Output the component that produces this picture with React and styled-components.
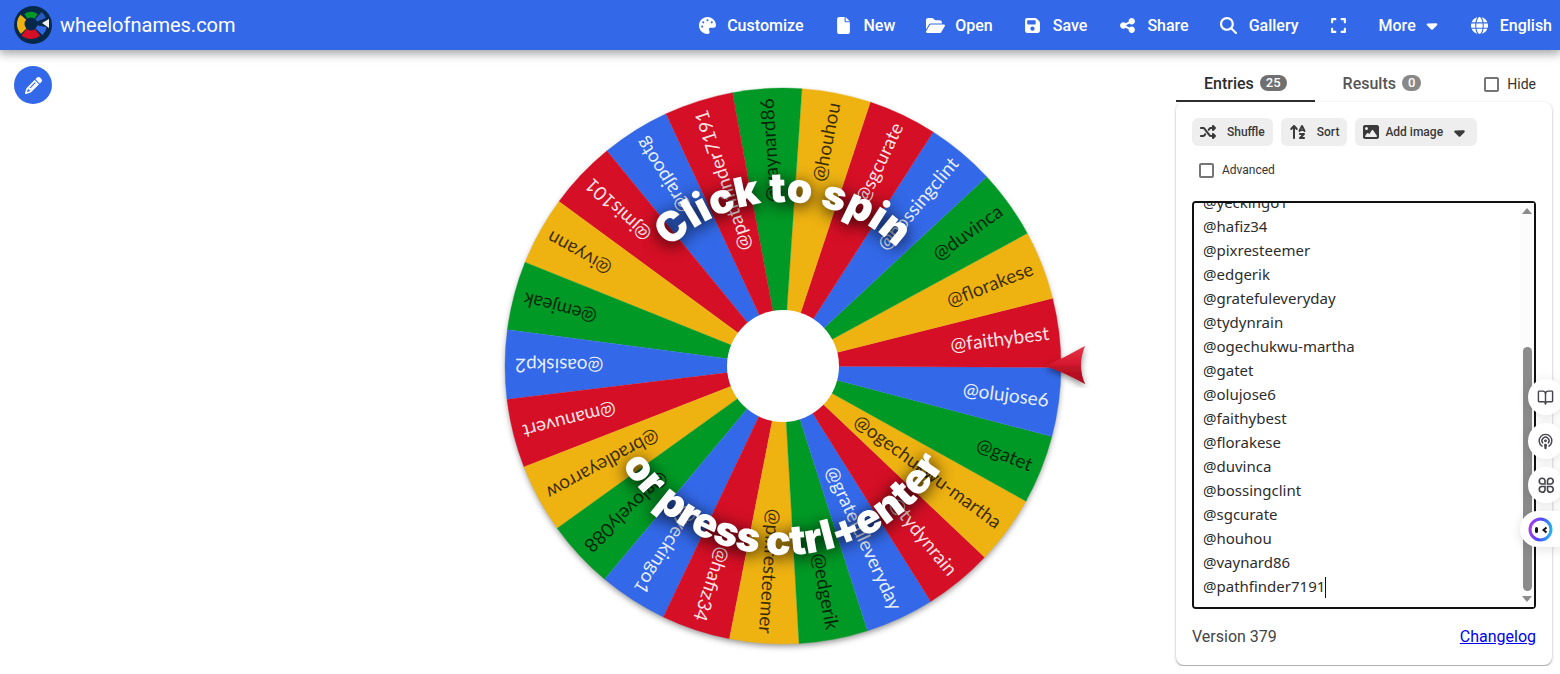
import { useEffect, useRef } from 'react';
import styled, { createGlobalStyle } from 'styled-components';
import {
  FaArrowUpAZ,
  FaCaretDown,
  FaExpand,
  FaFile,
  FaFloppyDisk,
  FaFolderOpen,
  FaGlobe,
  FaImage,
  FaMagnifyingGlass,
  FaPalette,
  FaPencil,
  FaShareNodes,
  FaShuffle,
} from 'react-icons/fa6';
import { BookOpen, Podcast } from 'lucide-react';

const BLUE = '#3369e8';
const RED = '#d50f25';
const YELLOW = '#eeb211';
const GREEN = '#009925';
const PALETTE = [BLUE, RED, YELLOW, GREEN];

const ENTRIES = [
  '@rajpootg',
  '@jmis101',
  '@ivyann',
  '@emjeak',
  '@oasiskp2',
  '@manuvert',
  '@bradleyarrow',
  '@glovely088',
  '@yeckingo1',
  '@hafiz34',
  '@pixresteemer',
  '@edgerik',
  '@gratefuleveryday',
  '@tydynrain',
  '@ogechukwu-martha',
  '@gatet',
  '@olujose6',
  '@faithybest',
  '@florakese',
  '@duvinca',
  '@bossingclint',
  '@sgcurate',
  '@houhou',
  '@vaynard86',
  '@pathfinder7191',
];

const GlobalStyle = createGlobalStyle`
  *, *::before, *::after {
    box-sizing: border-box;
  }

  body {
    margin: 0;
    background: #ffffff;
    color: #212121;
    font-family: Roboto, 'Liberation Sans', sans-serif;
    overflow: hidden;
  }

  button {
    font-family: inherit;
    border: none;
    padding: 0;
    cursor: pointer;
  }
`;

const Header = styled.header`
  position: relative;
  display: flex;
  align-items: center;
  justify-content: space-between;
  height: 50px;
  padding: 0 8px 0 14px;
  background: ${BLUE};
  color: #ffffff;
  box-shadow: 0 2px 10px 1px rgba(0, 0, 0, 0.4);
`;

const Brand = styled.a`
  display: flex;
  align-items: center;
  gap: 8px;
  color: inherit;
  font-size: 20px;
  text-decoration: none;
`;

const Nav = styled.nav`
  display: flex;
  align-items: center;
  gap: 28px;
`;

const NavButton = styled.button`
  display: flex;
  align-items: center;
  gap: 8px;
  height: 36px;
  background: none;
  color: inherit;
  font-size: 16px;
  font-weight: 500;
`;

const IconBox = styled.span`
  display: inline-flex;
  align-items: center;
  justify-content: center;
  width: ${(props) => props.$width || 24}px;
  flex: none;
`;

const Main = styled.main`
  display: flex;
  align-items: flex-start;
  padding-top: 16px;
`;

const Aside = styled.div`
  width: 25%;
  padding-left: 14px;
`;

const EditButton = styled.button`
  display: flex;
  align-items: center;
  justify-content: center;
  width: 38px;
  height: 38px;
  border-radius: 50%;
  background: ${BLUE};
  color: #ffffff;
`;

const Stage = styled.div`
  flex: 1;
  min-width: 0;
  display: flex;
  justify-content: center;
`;

const WheelSvg = styled.svg`
  display: block;
  width: 100%;
  max-width: 606px;
  overflow: visible;
  cursor: pointer;
`;

const SliceText = styled.text`
  font-family: Lato, sans-serif;
  font-size: 19px;
  text-anchor: end;
`;

const HintText = styled.text`
  font-family: Inter, 'Liberation Sans', sans-serif;
  font-size: 41px;
  font-weight: 900;
  fill: #ffffff;
  text-anchor: middle;
  filter: drop-shadow(0 3px 8px rgba(0, 0, 0, 0.9));
`;

const Panel = styled.section`
  width: 376px;
  flex: none;
  margin-right: 8px;
`;

const TabRow = styled.div`
  display: flex;
  align-items: center;
  height: 36px;
`;

const Tab = styled.button`
  display: flex;
  align-items: center;
  gap: 6px;
  height: 36px;
  padding: 0 28px;
  background: none;
  border-bottom: 2px solid ${(props) => (props.$active ? '#2d2d2d' : 'transparent')};
  color: ${(props) => (props.$active ? '#2d2d2d' : '#555555')};
  font-size: 16px;
  font-weight: 500;
`;

const Badge = styled.span`
  padding: 0 6px;
  border-radius: 8px;
  background: ${(props) => (props.$active ? '#707070' : '#888888')};
  color: #ffffff;
  font-size: 13px;
  line-height: 16px;
`;

const CheckLabel = styled.label`
  display: flex;
  align-items: center;
  gap: 8px;
  color: #333333;
  font-size: ${(props) => props.$size}px;
  line-height: 16px;
`;

const HideLabel = styled(CheckLabel)`
  margin-left: auto;
  margin-right: 16px;
`;

const Check = styled.input`
  appearance: none;
  width: 15px;
  height: 15px;
  margin: 0;
  border: 2px solid #757575;
  border-radius: 2px;
  background: #ffffff;
`;

const Card = styled.div`
  padding: 16px;
  border-radius: 8px;
  background: #ffffff;
  box-shadow: 0 1px 3px rgba(0, 0, 0, 0.25), 0 1px 1px rgba(0, 0, 0, 0.2);
`;

const Tools = styled.div`
  display: flex;
  gap: 8px;
`;

const ToolButton = styled.button`
  display: flex;
  align-items: center;
  gap: ${(props) => props.$gap}px;
  height: 28px;
  padding: 0 8px;
  border-radius: 6px;
  background: #eeeeee;
  color: #3a3a3a;
  font-size: 12px;
  font-weight: 500;
`;

const AdvancedRow = styled.div`
  padding: 16px 7px 23px;
`;

const EntriesBox = styled.div`
  position: relative;
`;

const EntriesInput = styled.textarea`
  display: block;
  width: 100%;
  height: 408px;
  padding: 8px 24px 9px 9px;
  border: 2px solid #111111;
  border-radius: 4px;
  outline: none;
  resize: none;
  overflow-y: scroll;
  scrollbar-width: none;
  background: #ffffff;
  color: #2d2d2d;
  font-family: 'Noto Sans', 'Open Sans', sans-serif;
  font-size: 15px;
  line-height: 24px;
`;

const ScrollBar = styled.div`
  position: absolute;
  top: 2px;
  right: 2px;
  bottom: 2px;
  width: 14px;
  display: flex;
  flex-direction: column;
  align-items: center;
  justify-content: flex-end;
  gap: 5px;
  padding: 5px 0;
  background: #fcfcfc;
  color: #8b8b8b;
`;

const ScrollArrow = styled.span`
  border: 5px solid transparent;
  border-top-width: ${(props) => (props.$up ? 0 : 6)}px;
  border-bottom-width: ${(props) => (props.$up ? 6 : 0)}px;
  border-${(props) => (props.$up ? 'bottom' : 'top')}-color: currentColor;
  margin-bottom: ${(props) => (props.$up ? 'auto' : 0)};
`;

const ScrollThumb = styled.span`
  width: 9px;
  height: 62%;
  border-radius: 5px;
  background: currentColor;
`;

const Caret = styled.span`
  position: absolute;
  left: 133px;
  bottom: 11px;
  width: 1px;
  height: 21px;
  background: #111111;
`;

const Footer = styled.footer`
  display: flex;
  align-items: center;
  justify-content: space-between;
  height: 40px;
  padding-top: 15px;
  color: #444444;
  font-size: 16px;

  a {
    color: #0000ee;
  }
`;

const FloatingBar = styled.div`
  position: fixed;
  top: 379px;
  right: -4px;
  display: flex;
  flex-direction: column;
  align-items: flex-end;
  gap: 8px;
`;

const FloatingButton = styled.button`
  display: flex;
  align-items: center;
  width: ${(props) => (props.$wide ? 44 : 36)}px;
  height: 36px;
  padding-left: ${(props) => (props.$wide ? 8 : 9)}px;
  border-radius: ${(props) => (props.$wide ? '18px 0 0 18px' : '18px')};
  background: #ffffff;
  color: #44444c;
  box-shadow: 0 2px 12px rgba(0, 0, 0, 0.12);
`;

const NAV_ITEMS = [
  { label: 'Customize', icon: <FaPalette size={17} /> },
  { label: 'New', icon: <FaFile size={17} /> },
  { label: 'Open', icon: <FaFolderOpen size={19} /> },
  { label: 'Save', icon: <FaFloppyDisk size={17} /> },
  { label: 'Share', icon: <FaShareNodes size={17} /> },
  { label: 'Gallery', icon: <FaMagnifyingGlass size={17} /> },
];

function point(radius, degrees) {
  const a = (degrees * Math.PI) / 180;
  return `${(radius * Math.cos(a)).toFixed(2)} ${(radius * Math.sin(a)).toFixed(2)}`;
}

function slicePath(mid, half, radius) {
  return `M0 0L${point(radius, mid - half)}A${radius} ${radius} 0 0 1 ${point(radius, mid + half)}Z`;
}

function ringPath(from, to, inner, outer) {
  return `M${point(inner, from)}L${point(outer, from)}A${outer} ${outer} 0 0 1 ${point(outer, to)}L${point(inner, to)}A${inner} ${inner} 0 0 0 ${point(inner, from)}Z`;
}

function Logo() {
  return (
    <svg width="38" height="38" viewBox="-19 -19 38 38" aria-hidden="true">
      <circle r="19" fill="#06294a" />
      <g transform="translate(-2 -1)">
        <path d={ringPath(-124, -57, 6, 12)} fill={GREEN} />
        <path d={ringPath(136, 222, 6, 14)} fill={YELLOW} />
        <path d={ringPath(52, 130, 6, 15)} fill={RED} />
        <path d={ringPath(-48, -22, 6, 16)} fill="#2758c4" />
        <path d={ringPath(12, 44, 6, 16)} fill={BLUE} />
        <circle r="6.5" fill="#06294a" />
      </g>
      <path d="M9 -2L16 -6V3Z" fill="#eeeeee" />
    </svg>
  );
}

function Wheel() {
  const step = 360 / ENTRIES.length;
  return (
    <WheelSvg viewBox="-303 -300 606 600" role="img" aria-label="Click to spin or press ctrl+enter">
      <defs>
        <filter id="wheelShadow" x="-10%" y="-10%" width="120%" height="120%">
          <feDropShadow dx="0" dy="3" stdDeviation="3" floodColor="#000000" floodOpacity="0.45" />
        </filter>
        <linearGradient id="pointerFill" x1="0" y1="0" x2="0" y2="1">
          <stop offset="0" stopColor="#e8354a" />
          <stop offset="0.5" stopColor="#d3172c" />
          <stop offset="1" stopColor="#a80d1e" />
        </linearGradient>
        <path id="topArc" d="M-164 0A164 164 0 0 1 164 0" />
        <path id="bottomArc" d="M-189 0A189 189 0 0 0 189 0" />
      </defs>
      <circle r="277" fill="#ffffff" filter="url(#wheelShadow)" />
      {ENTRIES.map((name, i) => {
        const mid = 237.9 - step * i;
        // the last slice must not repeat the colour of the first one
        const fill = i === ENTRIES.length - 1 ? RED : PALETTE[i % 4];
        const dark = fill === YELLOW || fill === GREEN;
        return (
          <g key={name}>
            <path d={slicePath(mid, step / 2, 278)} fill={fill} stroke={fill} strokeWidth="0.3" />
            <SliceText
              transform={`rotate(${mid.toFixed(1)})`}
              x="268"
              y="6"
              fill={dark ? '#000000' : '#ffffff'}
              fillOpacity={dark ? 0.75 : 0.9}
            >
              {name}
            </SliceText>
          </g>
        );
      })}
      <circle r="56" fill="#ffffff" />
      <HintText>
        <textPath href="#topArc" startOffset="50%">Click to spin</textPath>
      </HintText>
      <HintText>
        <textPath href="#bottomArc" startOffset="50%">or press ctrl+enter</textPath>
      </HintText>
      <g filter="url(#wheelShadow)">
        <path d="M262 0Q283 -9 302 -20Q294 0 302 18Q283 7 262 0Z" fill="url(#pointerFill)" />
        <path d="M262 0L298 0Q298 10 302 18Q283 7 262 0Z" fill="#b01022" fillOpacity="0.5" />
      </g>
    </WheelSvg>
  );
}

function EntriesEditor() {
  const ref = useRef(null);

  useEffect(() => {
    const el = ref.current;
    el.scrollTop = el.scrollHeight;
  }, []);

  return (
    <EntriesBox>
      <EntriesInput ref={ref} aria-label="Entries" spellCheck={false} defaultValue={ENTRIES.join('\n')} />
      <Caret />
      <ScrollBar aria-hidden="true">
        <ScrollArrow $up />
        <ScrollThumb />
        <ScrollArrow />
      </ScrollBar>
    </EntriesBox>
  );
}

function GridIcon() {
  return (
    <svg width="18" height="18" viewBox="0 0 18 18" fill="none" stroke="currentColor" strokeWidth="1.6" aria-hidden="true">
      <path d="M8 8H4.5A2.9 2.9 0 1 1 8 4.6Z" />
      <path d="M10.5 8V4.6A2.9 2.9 0 1 1 14 8Z" />
      <path d="M8 10.5V14A2.9 2.9 0 1 1 4.5 10.5Z" />
      <path d="M10.5 10.5H14A2.9 2.9 0 1 1 10.5 14Z" />
    </svg>
  );
}

function FaceIcon() {
  return (
    <svg width="25" height="25" viewBox="0 0 25 25" fill="none" aria-hidden="true">
      <defs>
        <linearGradient id="faceRing" x1="0" y1="0.6" x2="1" y2="0.8">
          <stop offset="0" stopColor="#a23be8" />
          <stop offset="0.45" stopColor="#4a4bf6" />
          <stop offset="1" stopColor="#22b8ee" />
        </linearGradient>
      </defs>
      <circle cx="12.5" cy="12.5" r="10.5" stroke="url(#faceRing)" strokeWidth="3" />
      <rect x="7" y="10" width="3" height="6" rx="1.5" fill="#111111" />
      <path d="M18.5 10.5L15.5 13L18.5 15.5" stroke="#111111" strokeWidth="2" />
    </svg>
  );
}

export default function App() {
  return (
    <>
      <GlobalStyle />
      <Header>
        <Brand href="#">
          <Logo />
          wheelofnames.com
        </Brand>
        <Nav>
          {NAV_ITEMS.map((item) => (
            <NavButton key={item.label}>
              <IconBox>{item.icon}</IconBox>
              {item.label}
            </NavButton>
          ))}
          <NavButton aria-label="Fullscreen">
            <IconBox>
              <FaExpand size={17} />
            </IconBox>
          </NavButton>
          <NavButton>
            More
            <IconBox $width={16}>
              <FaCaretDown size={17} />
            </IconBox>
          </NavButton>
          <NavButton>
            <IconBox>
              <FaGlobe size={17} />
            </IconBox>
            English
          </NavButton>
        </Nav>
      </Header>
      <Main>
        <Aside>
          <EditButton aria-label="Edit title">
            <FaPencil size={17} />
          </EditButton>
        </Aside>
        <Stage>
          <Wheel />
        </Stage>
        <Panel>
          <TabRow>
            <Tab $active>
              Entries <Badge $active>25</Badge>
            </Tab>
            <Tab>
              Results <Badge>0</Badge>
            </Tab>
            <HideLabel $size={14}>
              <Check type="checkbox" />
              Hide
            </HideLabel>
          </TabRow>
          <Card>
            <Tools>
              <ToolButton $gap={11}>
                <FaShuffle size={16} />
                Shuffle
              </ToolButton>
              <ToolButton $gap={10}>
                <FaArrowUpAZ size={18} />
                Sort
              </ToolButton>
              <ToolButton $gap={6}>
                <FaImage size={16} />
                Add image
                <IconBox $width={20}>
                  <FaCaretDown size={17} />
                </IconBox>
              </ToolButton>
            </Tools>
            <AdvancedRow>
              <CheckLabel $size={12}>
                <Check type="checkbox" />
                Advanced
              </CheckLabel>
            </AdvancedRow>
            <EntriesEditor />
            <Footer>
              <span>Version 379</span>
              <a href="#changelog">Changelog</a>
            </Footer>
          </Card>
        </Panel>
      </Main>
      <FloatingBar>
        <FloatingButton aria-label="Read">
          <BookOpen size={17} />
        </FloatingButton>
        <FloatingButton aria-label="Podcast">
          <Podcast size={17} />
        </FloatingButton>
        <FloatingButton aria-label="Apps">
          <GridIcon />
        </FloatingButton>
        <FloatingButton $wide aria-label="Assistant">
          <FaceIcon />
        </FloatingButton>
      </FloatingBar>
    </>
  );
}
